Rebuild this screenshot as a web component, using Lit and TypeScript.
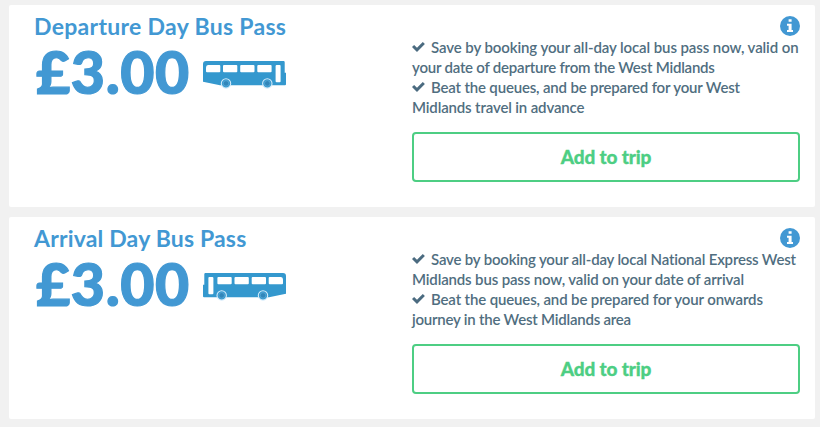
import { LitElement, html, css, svg } from "lit";
import { customElement, property } from "lit/decorators.js";

interface Line { text: string; tick?: boolean; spacing: number; }
interface Pass { title: string; spacing: number; price: string; flip: boolean; lines: Line[]; }

const PASSES: Pass[] = [
  {
    title: "Departure Day Bus Pass", spacing: 0.3, price: "£3.00", flip: false,
    lines: [
      { text: "Save by booking your all-day local bus pass now, valid on", tick: true, spacing: -0.1 },
      { text: "your date of departure from the West Midlands", spacing: -0.22 },
      { text: "Beat the queues, and be prepared for your West", tick: true, spacing: -0.17 },
      { text: "Midlands travel in advance", spacing: -0.15 },
    ],
  },
  {
    title: "Arrival Day Bus Pass", spacing: 0.18, price: "£3.00", flip: true,
    lines: [
      { text: "Save by booking your all-day local National Express West", tick: true, spacing: -0.19 },
      { text: "Midlands bus pass now, valid on your date of arrival", spacing: -0.15 },
      { text: "Beat the queues, and be prepared for your onwards", tick: true, spacing: -0.14 },
      { text: "journey in the West Midlands area", spacing: -0.22 },
    ],
  },
];

@customElement("bus-icon")
class BusIcon extends LitElement {
  @property({ type: Boolean, reflect: true }) flip = false;
  static styles = css`
    :host { display: block; width: 83px; height: 28px; }
    :host([flip]) { transform: scaleX(-1); }
    svg { display: block; }
    .body { fill: #3498ce; }
    .glass { fill: #fff; }
    .wheel { fill: #3498ce; stroke: #d3eafa; stroke-width: 1.1; }
    .hub { fill: #3186ba; stroke: #68b4df; stroke-width: .6; }
  `;
  render() {
    return html`<svg width="83" height="28" viewBox="0 0 83 28">
      <path class="body" d="M3 0H80.5Q81.7 0 81.7 1.2V11.7H83V23.3Q83 24.3 82 24.3H17L0 20.8V3Q0 0 3 0Z"/>
      <path class="glass" d="M5 4H16.4Q17.3 4 17.3 5V10.2Q17.3 11.2 16.3 11.2H4Q3 11.2 3 10.2V6.5Q3 4 5 4Z"/>
      ${[20, 37.2, 54.3].map((x) => svg`<rect class="glass" x=${x} y="4" width="14.3" height="7.2" rx="1"/>`)}
      <rect class="glass" x="72.6" y="4" width="5" height="17.2" rx="1"/>
      ${[23, 64.3].map((x) => svg`<circle class="wheel" cx=${x} cy="22.4" r="4.7"/><circle class="hub" cx=${x} cy="22.4" r="2.8"/>`)}
    </svg>`;
  }
}

@customElement("pass-card")
class PassCard extends LitElement {
  @property({ attribute: false }) pass!: Pass;
  static styles = css`
    :host {
      display: grid; grid-template-columns: 378px 388px; box-sizing: border-box;
      width: 806px; height: 202px; padding: 0 15px 0 25px;
      background: #fff; border-radius: 2px; font-variant-ligatures: none;
    }
    .title {
      margin: 7px 0 0; height: 28px; line-height: 28px; white-space: nowrap;
      font-size: 23px; font-weight: 700; color: #4298d3;
    }
    .offer { display: flex; align-items: flex-start; }
    .price {
      box-sizing: border-box; width: 169px; padding-left: 2px; font-size: 59px; line-height: 64px;
      font-weight: 900; color: #4298d3; letter-spacing: .6px; white-space: nowrap;
      -webkit-text-stroke: 1.2px #4298d3;
    }
    bus-icon { margin-top: 21px; }
    .details { display: flex; flex-direction: column; }
    .info { align-self: flex-end; display: block; margin-top: 11px; }
    .lines { margin: 1px 0 15px; }
    .line { display: flex; align-items: center; height: 20px; line-height: 20px; font-size: 15px; font-weight: 600; color: #506e80; white-space: nowrap; }
    .tick { width: 13px; height: 10px; margin-right: 6px; flex: none; }
    button {
      box-sizing: border-box; width: 388px; height: 50px; padding: 0; background: #fff;
      border: 2px solid #4dce83; border-radius: 4px; color: #4dce83;
      font: 900 19px/46px Lato, sans-serif; letter-spacing: -.15px; -webkit-text-stroke: .3px #4dce83;
    }
  `;
  render() {
    const p = this.pass;
    return html`
      <div>
        <h2 class="title"><span style="letter-spacing:${p.spacing}px">${p.title}</span></h2>
        <div class="offer"><span class="price">${p.price}</span><bus-icon ?flip=${p.flip}></bus-icon></div>
      </div>
      <div class="details">
        <svg class="info" width="20" height="20" viewBox="0 0 20 20">
          <circle cx="10" cy="10" r="10" fill="#4298d3"/>
          <path fill="#fff" d="M8.6 3.3h3v2.5h-3zM7 7.7h4.6v6.2H13V16H7v-2.1h1.6V9.8H7z"/>
        </svg>
        <div class="lines">
          ${p.lines.map((l) => html`<div class="line">
            ${l.tick ? html`<svg class="tick" viewBox="0 0 13 10"><path fill="#4b6b80" d="M0 5.1L2.1 3 5 5.8 10.8 0 12.9 2.1 5 10Z"/></svg>` : ""}
            <span style="letter-spacing:${l.spacing}px">${l.text}</span>
          </div>`)}
        </div>
        <button>Add to trip</button>
      </div>`;
  }
}

@customElement("app-root")
class AppRoot extends LitElement {
  static styles = css`
    :host {
      display: flex; flex-direction: column; gap: 10px; box-sizing: border-box;
      width: 820px; height: 427px; padding: 5px 0 0 9px; overflow: hidden;
      background: #f1f1f1; font-family: Lato, sans-serif;
    }
  `;
  render() {
    return PASSES.map((p) => html`<pass-card .pass=${p}></pass-card>`);
  }
}
